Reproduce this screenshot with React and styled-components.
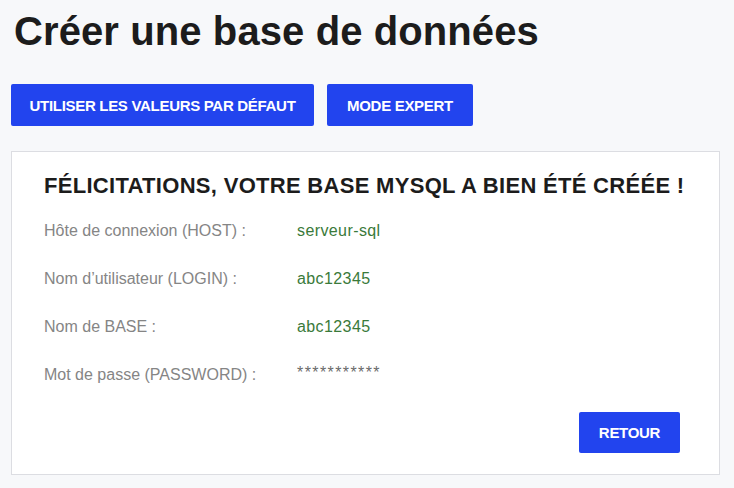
import React from 'react';
import styled, { createGlobalStyle } from 'styled-components';

const GlobalStyle = createGlobalStyle`
  body {
    margin: 0;
    background: #f7f8fa;
    font-family: "Liberation Sans", Arial, sans-serif;
  }
`;

const Page = styled.div`
  padding: 7px 14px 0 11px;
`;

const Title = styled.h1`
  margin: 0 0 0 3px;
  font-size: 40px;
  line-height: 48px;
  font-weight: 700;
  color: #1c1c1c;
  letter-spacing: 0.1px;
`;

const Actions = styled.div`
  display: flex;
  gap: 13px;
  margin-top: 29px;
`;

const Button = styled.button`
  height: ${(p) => p.$h || 42}px;
  width: ${(p) => (p.$w ? `${p.$w}px` : 'auto')};
  padding: 0;
  border: none;
  border-radius: 2px;
  background: #2244ee;
  color: #fff;
  font-family: "Liberation Sans", Arial, sans-serif;
  font-size: 15px;
  font-weight: 700;
  letter-spacing: -0.3px;
  white-space: nowrap;
  cursor: pointer;
`;

const Card = styled.section`
  margin-top: 25px;
  width: 709px;
  box-sizing: border-box;
  height: 324px;
  background: #fff;
  border: 1px solid #dcdde2;
  padding: 22px 32px 0 32px;
  display: flex;
  flex-direction: column;
`;

const CardTitle = styled.h2`
  margin: 0 0 9px 0;
  font-size: 22px;
  line-height: 24px;
  font-weight: 700;
  color: #1c1c1c;
  letter-spacing: 0.3px;
`;

const Row = styled.div`
  display: grid;
  grid-template-columns: 253px 1fr;
  height: 48px;
  align-items: center;
  font-size: 16px;
`;

const Label = styled.span`
  color: #858585;
`;

const Value = styled.span`
  color: ${(p) => (p.$mask ? '#6b6b6b' : '#3a7a3a')};
  letter-spacing: ${(p) => (p.$mask ? '1.4px' : '0.4px')};
  position: relative;
  top: ${(p) => (p.$mask ? '-2px' : '0')};
`;

const Footer = styled.div`
  display: flex;
  justify-content: flex-end;
  margin-top: 13px;
  padding-right: 7px;
`;

const rows = [
  ['Hôte de connexion (HOST) :', 'serveur-sql'],
  ['Nom d’utilisateur (LOGIN) :', 'abc12345'],
  ['Nom de BASE :', 'abc12345'],
  ['Mot de passe (PASSWORD) :', '***********', true],
];

export default function App() {
  return (
    <>
      <GlobalStyle />
      <Page>
        <Title>Créer une base de données</Title>
        <Actions>
          <Button $w={303}>UTILISER LES VALEURS PAR DÉFAUT</Button>
          <Button $w={146}>MODE EXPERT</Button>
        </Actions>
        <Card>
          <CardTitle>FÉLICITATIONS, VOTRE BASE MYSQL A BIEN ÉTÉ CRÉÉE !</CardTitle>
          {rows.map(([label, value, mask]) => (
            <Row key={label}>
              <Label>{label}</Label>
              <Value $mask={mask}>{value}</Value>
            </Row>
          ))}
          <Footer>
            <Button $w={101} $h={41}>RETOUR</Button>
          </Footer>
        </Card>
      </Page>
    </>
  );
}
